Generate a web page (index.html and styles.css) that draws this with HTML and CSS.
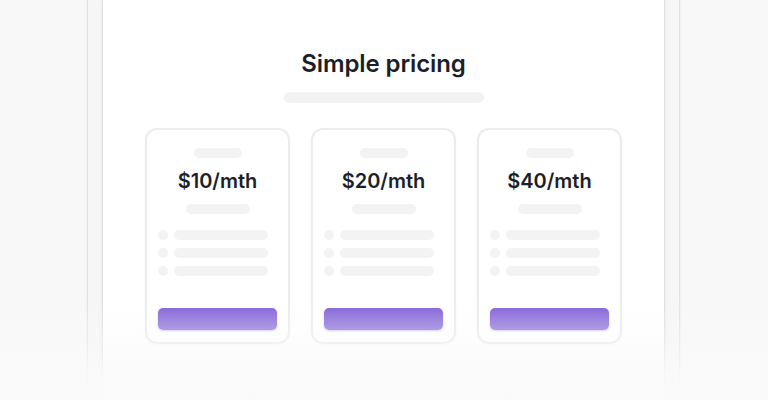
FILE: index.html
```html
<!DOCTYPE html>
<html lang="en">
<head>
  <meta charset="UTF-8" />
  <meta name="viewport" content="width=device-width, initial-scale=1.0" />
  <title>Simple pricing</title>
  <link rel="stylesheet" href="styles.css">
</head>
<body>

<div class="device">
  <div class="screen">
    <h1>Simple pricing</h1>
    <div class="pill pill-sub"></div>

    <div class="plans">
      <div class="plan">
        <div class="pill pill-name"></div>
        <div class="price">$10/mth</div>
        <div class="pill pill-desc"></div>
        <ul class="features">
          <li><span class="dot"></span><span class="bar"></span></li>
          <li><span class="dot"></span><span class="bar"></span></li>
          <li><span class="dot"></span><span class="bar"></span></li>
        </ul>
        <div class="btn"></div>
      </div>

      <div class="plan">
        <div class="pill pill-name"></div>
        <div class="price">$20/mth</div>
        <div class="pill pill-desc"></div>
        <ul class="features">
          <li><span class="dot"></span><span class="bar"></span></li>
          <li><span class="dot"></span><span class="bar"></span></li>
          <li><span class="dot"></span><span class="bar"></span></li>
        </ul>
        <div class="btn"></div>
      </div>

      <div class="plan">
        <div class="pill pill-name"></div>
        <div class="price">$40/mth</div>
        <div class="pill pill-desc"></div>
        <ul class="features">
          <li><span class="dot"></span><span class="bar"></span></li>
          <li><span class="dot"></span><span class="bar"></span></li>
          <li><span class="dot"></span><span class="bar"></span></li>
        </ul>
        <div class="btn"></div>
      </div>
    </div>
  </div>
</div>

<!-- bottom fade -->
<div class="fade"></div>

</body>
</html>
```

FILE: styles.css
```css
body {
  margin: 0;
  padding: 0;
  font-family: 'Inter', 'Liberation Sans', sans-serif;
  background-color: #f8f8f8;
  color: #1c1f2a;
  height: 400px;
  overflow: hidden;
  display: flex;
  justify-content: center;
}

/* tablet frame */
.device {
  margin-left: -1px;
  width: 563px;
  height: 420px;
  padding: 0 14px;
  background: #f6f6f6;
  border-left: 1px solid #e2e2e2;
  border-right: 1px solid #e2e2e2;
  box-shadow: 0 0 3px rgba(0, 0, 0, 0.06);
}

.screen {
  height: 100%;
  background: #ffffff;
  border-left: 1px solid #e0e0e0;
  border-right: 1px solid #e0e0e0;
  box-shadow: 0 0 3px rgba(0, 0, 0, 0.08);
  display: flex;
  flex-direction: column;
  align-items: center;
  padding-top: 49px;
  box-sizing: border-box;
}

h1 {
  margin: 0;
  font-size: 24px;
  line-height: 30px;
  font-weight: 600;
  letter-spacing: -0.1px;
}

.pill {
  background: #f3f3f3;
  border-radius: 5px;
  height: 10px;
}

.pill-sub {
  width: 200px;
  height: 11px;
  margin-top: 13px;
  border-radius: 6px;
}

.plans {
  display: flex;
  gap: 21px;
  margin-top: 25px;
}

.plan {
  width: 145px;
  height: 216px;
  box-sizing: border-box;
  border: 2px solid #ececec;
  border-radius: 12px;
  padding: 18px 11px 12px;
  display: flex;
  flex-direction: column;
  align-items: center;
  box-shadow: 0 1px 3px rgba(0, 0, 0, 0.03);
}

.pill-name {
  width: 48px;
}

.price {
  margin-top: 11px;
  font-size: 20px;
  line-height: 24px;
  font-weight: 600;
}

.pill-desc {
  width: 64px;
  margin-top: 11px;
}

.features {
  list-style: none;
  margin: 16px 0 0;
  padding: 0;
  align-self: stretch;
  display: flex;
  flex-direction: column;
  gap: 8px;
}

.features li {
  display: flex;
  gap: 6px;
}

.dot {
  width: 10px;
  height: 10px;
  border-radius: 50%;
  background: #f3f3f3;
}

.bar {
  width: 94px;
  height: 10px;
  border-radius: 5px;
  background: #f3f3f3;
}

.btn {
  margin-top: auto;
  align-self: stretch;
  height: 22px;
  border-radius: 5px;
  background: linear-gradient(180deg, #8160d6 0%, #9479dd 100%);
  box-shadow: 0 1px 2px rgba(110, 80, 200, 0.35);
}

/* fade at the bottom of the picture */
.fade {
  position: absolute;
  left: 0;
  right: 0;
  top: 300px;
  height: 100px;
  background: linear-gradient(180deg, rgba(250, 250, 250, 0) 0%, rgba(250, 250, 250, 0.35) 40%, rgba(250, 250, 250, 0.9) 75%, #fafafa 100%);
  pointer-events: none;
}
```
